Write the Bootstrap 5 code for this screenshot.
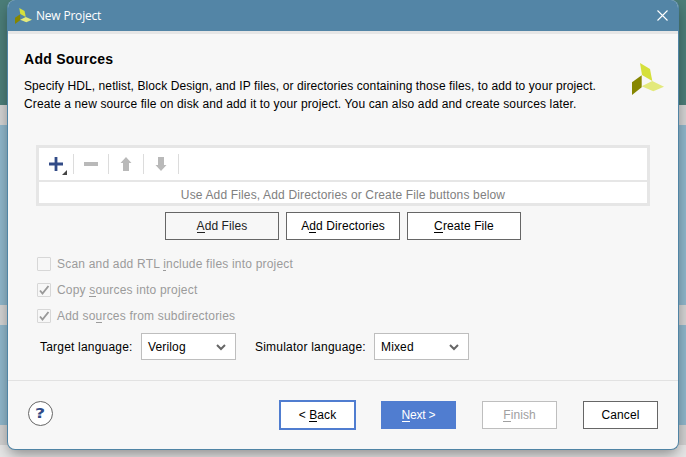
<!DOCTYPE html>
<html lang="en">
<head>
<meta charset="utf-8">
<title>New Project</title>
<link href="https://cdn.jsdelivr.net/npm/bootstrap@5.3.0/dist/css/bootstrap.min.css" rel="stylesheet">
<style>
body{height:457px;font:12px/18px "Liberation Sans",Arial,sans-serif;color:#000;
 background:linear-gradient(#4b7d78 0 105px,#d2d2d2 105px 125px,#8fb6ca 125px 305px,#d2d2d2 305px 325px,#8fb6ca 325px 425px,#d0d0d0 425px 445px,#e6e6e6 445px)}
.dialog{width:672px;height:450px;margin-left:7px;background:#f7f7f7;border:1px solid #5084a5;border-top:0;border-radius:8px;box-shadow:0 6px 14px -2px rgba(0,0,0,.4)}
.titlebar{height:31px;background:#5385a6;color:#fff;font:12px/31px "Open Sans",sans-serif;letter-spacing:-.2px;padding:0 10px 0 7px}
.strip{height:3px;background:#e6e6e6}
.intro{height:111px;padding:16px 15px 0 16px}
.intro h1{font:bold 14px/18px "Liberation Sans",sans-serif;letter-spacing:.27px;margin:0 0 9px}
.l1{letter-spacing:.095px}.l2{letter-spacing:.13px}
.brand{margin:13px -1px 0 0}
.sources{width:614px;height:61px;margin-left:28px;border:3px solid #e6e6e6;background:#fff}
.tools{height:34px;border-bottom:2px solid #e6e6e6}
.tool{width:35px;height:20px;border-right:1px solid #dcdcdc}
.hint{color:#808080;line-height:26px;height:21px;letter-spacing:.15px}
.btn{--bs-btn-font-size:12px;--bs-btn-line-height:14px;--bs-btn-padding-x:0;--bs-btn-padding-y:0;--bs-btn-border-radius:0;--bs-btn-color:#000;--bs-btn-bg:#fff;--bs-btn-border-color:#666;height:28px;letter-spacing:.1px}
.add-row{margin:6px 0 0 157px;gap:7px}
.add-row .btn{width:114px}
.foot .btn{width:75px}
.foot .btn.back{width:77px;height:30px;border:2px solid #507dd0;margin-right:25px}
.btn.next{--bs-btn-bg:#507dd0;--bs-btn-border-color:#507dd0;--bs-btn-color:#fff;letter-spacing:-.2px;margin-right:26px}
.btn.off{--bs-btn-color:#a0a0a0;--bs-btn-border-color:#bebebe;margin-right:26px}
.btn.soft{--bs-btn-bg:#f7f7f7;--bs-btn-color:#222}
u{text-decoration:none;box-shadow:inset 0 -1px currentColor;display:inline-block;line-height:14px;height:14px}
.checks{margin:11px 0 0 29px;color:#9b9b9b;letter-spacing:.2px}
.opt{height:26px;gap:6px}
.box{width:14px;height:14px;border:1px solid #d7d7d7;border-radius:1px;flex:none}
.langs{margin:4px 0 0 32px;height:27px}
.lab1{width:101px;letter-spacing:.2px}
.lab2{width:119px;margin-left:19px;letter-spacing:.22px}
.combo{width:95px;height:27px;border:1px solid #bebebe;background:#fff;padding:0 9px 0 6px;letter-spacing:.15px}
.rule{height:1px;margin-top:20px;background:#e2e2e2}
.foot{margin-top:19px;height:30px;padding:0 20px}
.help{width:25px;height:25px;margin-top:-3px;border:1px solid #666;border-radius:50%;background:#fff;color:#324b87;font:bold 14px/23px "DejaVu Sans",sans-serif}
.help span{display:inline-block;transform:scaleX(1.25)}
</style>
<script src="https://cdn.jsdelivr.net/npm/bootstrap@5.3.0/dist/js/bootstrap.bundle.min.js"></script>
</head>
<body class="overflow-hidden">
<svg class="d-none"><defs><g id="logo"><path fill="#d5e03b" d="M8 0 18 6 20.300 18 10 12Z"/><path fill="#868600" d="M0 19.300 9.700 12.300V24.300L0 32Z"/><path fill="#e3e97c" d="M9.700 23.300 20.300 18 32 23.700 21.300 28.300Z"/></g></defs></svg>
<main class="dialog overflow-hidden">
<header class="titlebar d-flex align-items-center justify-content-between">
<span class="d-flex align-items-center"><svg width="17" height="16" viewBox="0 0 32 32" preserveAspectRatio="none" class="me-1"><use href="#logo"/></svg><span>New Project</span></span>
<svg width="11" height="11" viewBox="0 0 11 11"><path d="M.5.5l10 10M10.500.5l-10 10" stroke="#fff" stroke-width="1.100"/></svg>
</header>
<div class="strip"></div>
<section class="intro d-flex justify-content-between text-nowrap">
<div><h1>Add Sources</h1>
<div class="l1">Specify HDL, netlist, Block Design, and IP files, or directories containing those files, to add to your project.</div>
<div class="l2">Create a new source file on disk and add it to your project. You can also add and create sources later.</div></div>
<svg class="brand flex-shrink-0" width="32" height="32" viewBox="0 0 32 32"><use href="#logo"/></svg>
</section>
<section class="sources">
<div class="tools d-flex align-items-center">
<span class="tool"><svg class="d-block" width="34" height="22"><path d="M10 10h14M17 3v14" stroke="#324b87" stroke-width="2.800"/><path d="M28 16v5h-5z" fill="#444"/></svg></span>
<span class="tool"><svg class="d-block" width="34" height="20"><path d="M10 10h14" stroke="#b9b9b9" stroke-width="4"/></svg></span>
<span class="tool"><svg class="d-block" width="34" height="20"><path d="M17 3l5.500 6H20v8h-6V9h-2.500z" fill="#b9b9b9"/></svg></span>
<span class="tool"><svg class="d-block" width="34" height="20"><path d="M17 17l5.500-6H20V3h-6v8h-2.500z" fill="#b9b9b9"/></svg></span>
</div>
<div class="hint text-center">Use Add Files, Add Directories or Create File buttons below</div>
</section>
<div class="add-row d-flex"><button class="btn soft"><u>A</u>dd Files</button><button class="btn">A<u>d</u>d Directories</button><button class="btn"><u>C</u>reate File</button></div>
<section class="checks">
<div class="opt d-flex align-items-center"><span class="box"></span><span>Scan and add RTL <u>i</u>nclude files into project</span></div>
<div class="opt d-flex align-items-center"><span class="box d-flex"><svg width="12" height="12"><path d="M2 6.500 4.500 9.500 10.500 2" fill="none" stroke="#999" stroke-width="1.900"/></svg></span><span>Copy <u>s</u>ources into project</span></div>
<div class="opt d-flex align-items-center"><span class="box d-flex"><svg width="12" height="12"><path d="M2 6.500 4.500 9.500 10.500 2" fill="none" stroke="#999" stroke-width="1.900"/></svg></span><span>Add so<u>u</u>rces from subdirectories</span></div>
</section>
<section class="langs d-flex align-items-center text-nowrap">
<span class="lab1">Target language:</span><span class="combo d-flex align-items-center justify-content-between"><span>Verilog</span><svg width="10" height="8"><path d="M1 2l4 4 4-4" fill="none" stroke="#666" stroke-width="2"/></svg></span>
<span class="lab2">Simulator language:</span><span class="combo d-flex align-items-center justify-content-between"><span>Mixed</span><svg width="10" height="8"><path d="M1 2l4 4 4-4" fill="none" stroke="#666" stroke-width="2"/></svg></span>
</section>
<div class="rule"></div>
<footer class="foot d-flex align-items-center"><span class="help text-center me-auto"><span>?</span></span>
<button class="btn back">&lt; <u>B</u>ack</button><button class="btn next"><u>N</u>ext &gt;</button><button class="btn off"><u>F</u>inish</button><button class="btn">Cancel</button></footer>
</main>
</body>
</html>
